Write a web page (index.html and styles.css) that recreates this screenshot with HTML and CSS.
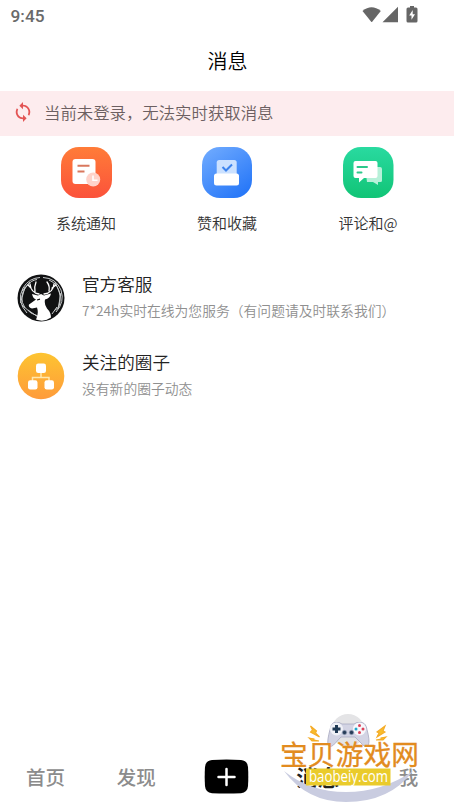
FILE: index.html
```html
<!DOCTYPE html>
<html lang="zh-CN">
<head>
<meta charset="utf-8">
<title>消息</title>
<link rel="stylesheet" href="styles.css">
</head>
<body>
<div class="app">
  <div class="status">
    <span class="time">9:45</span>
    <svg class="status-icons" width="58" height="20" viewBox="0 0 58 20">
      <path d="M.5 5Q9.500-2.500 18.800 5L10.200 15.700Q9.700 16.200 9.200 15.700Z"/>
      <path d="M20.500 16.300 36 .8v15.500z"/>
      <path d="M48 0h4v1.500h2q1.500 0 1.500 1.500v12q0 1.500-1.500 1.500h-8q-1.500 0-1.500-1.500V3q0-1.500 1.500-1.500h2z"/>
      <path class="bolt" d="m50.700 4-3.500 5.500h2.300v4.300l3.500-5.500h-2.300z"/>
    </svg>
  </div>
  <header class="title">消息</header>
  <div class="notice">
    <svg width="16" height="20" viewBox="4 1 16 22">
      <path class="sync" d="M12 4V1L8 5l4 4V6c3.310 0 6 2.690 6 6 0 1.010-.25 1.970-.7 2.800l1.460 1.460C19.540 15.030 20 13.570 20 12c0-4.420-3.580-8-8-8zm0 14c-3.310 0-6-2.690-6-6 0-1.010.25-1.970.7-2.800L5.240 7.740C4.460 8.970 4 10.430 4 12c0 4.420 3.580 8 8 8v3l4-4-4-4v3z"/>
    </svg>
    <span>当前未登录，无法实时获取消息</span>
  </div>
  <section class="shortcuts">
    <div class="shortcut">
      <svg width="51" height="51" viewBox="0 0 51 51">
        <defs><linearGradient id="red" x1="0" y1="0" x2="0" y2="1"><stop stop-color="#ff7c38"/><stop offset="1" stop-color="#fb523b"/></linearGradient></defs>
        <rect width="51" height="51" rx="18" fill="url(#red)"/>
        <rect x="11.500" y="12" width="23" height="25" rx="3" fill="#fff"/>
        <path d="M16.500 18.800h12M16.500 24.600h7" stroke="#d9785e" stroke-width="2"/>
        <circle cx="32.200" cy="32.500" r="7" fill="#ffd3ca"/>
        <path d="M32 28.500v4.800h4.500" fill="none" stroke="#fff" stroke-width="1.600"/>
      </svg>
      <span>系统通知</span>
    </div>
    <div class="shortcut">
      <svg width="51" height="51" viewBox="0 0 51 51">
        <defs><linearGradient id="blue" x1="0" y1="0" x2=".7" y2="1"><stop stop-color="#73adff"/><stop offset="1" stop-color="#2878f8"/></linearGradient></defs>
        <rect width="50" height="51" rx="18" fill="url(#blue)"/>
        <rect x="14.700" y="13" width="20" height="18" rx="2.500" fill="#cbe1ff"/>
        <path d="m20.500 20 3.500 3.500 6-6" fill="none" stroke="#3c83ed" stroke-width="2"/>
        <rect x="12" y="26.500" width="25" height="12" rx="2.500" fill="#fff"/>
      </svg>
      <span>赞和收藏</span>
    </div>
    <div class="shortcut">
      <svg width="51" height="51" viewBox="0 0 51 51">
        <defs><linearGradient id="green" x1="0" y1="0" x2="0" y2="1"><stop stop-color="#29daa0"/><stop offset="1" stop-color="#11c476"/></linearGradient></defs>
        <rect width="50.500" height="51" rx="18" fill="url(#green)"/>
        <path d="M22 20h15q2 0 2 2v11.500q0 1.500-1.500 1.500H35v3l-5-3h-6z" fill="#b7f0d9"/>
        <path d="M12.500 14h20q2 0 2 2v13q0 2-2 2H21l-5 4.500V31h-3.500q-2 0-2-2V16q0-2 2-2z" fill="#fff"/>
        <path d="M14.500 20h9.500M14.500 25.500h4" stroke="#2cc98b" stroke-width="2" stroke-linecap="round"/>
      </svg>
      <span>评论和@</span>
    </div>
  </section>
  <section class="list">
    <div class="row">
      <svg width="48" height="48" viewBox="0 0 48 48">
        <circle cx="24" cy="24" r="23.500" fill="#101112"/>
        <g fill="none" stroke="#c9cccd" stroke-width="1">
          <path d="M10 39Q-1 27 6 14 12 4 23 3.500M8 34Q1 23 9 13 14 6 20 5.500M5 17 13 8M3.500 29 8 13M5 31l9 8 7 3M11 36l10 7"/>
          <path d="M26 3.500Q39 4 44 16 48 28 39 38M32 6Q42 10 43 22T38 36M38 8l6 14M44 19l-3 16M40 33l-5 7"/>
        </g>
        <g fill="none" stroke="#fff" stroke-width="1.300" stroke-linecap="round">
          <path d="M22 20Q14 19 13 10M18 18Q17 13 19 8M14 14l-3-3M27 20Q36 19 37 10M32 17Q33 12 30 8M35 14l4-3"/>
        </g>
        <path d="m15 20 6 1.500 3-1.500 3 1.500 7-2q-1 5-6 6-1 5 2 9 4 4 4 9-7 5-15 2 3-6 1-12l-5 1q-4-1-3-4l7-5q-3-1-4-5.500z" fill="#fff"/>
        <path d="m20 26 3-.8" stroke="#111" stroke-width="1.200"/>
      </svg>
      <div class="row-text"><div class="name">官方客服</div><div class="desc">7*24h实时在线为您服务（有问题请及时联系我们）</div></div>
    </div>
    <div class="row">
      <svg width="48" height="48" viewBox="0 0 48 48">
        <defs><linearGradient id="amber" x1="0" y1="0" x2="0" y2="1"><stop stop-color="#fdc431"/><stop offset="1" stop-color="#fe9b3b"/></linearGradient></defs>
        <circle cx="24" cy="24" r="23.300" fill="url(#amber)"/>
        <path d="M24 20v5.500M15.500 30v-4.500h16.500V30" fill="none" stroke="#ffe8ae" stroke-width="1.500"/>
        <g fill="#fff"><rect x="19" y="11.500" width="10" height="9.500" rx="2.200"/><rect x="11" y="28.200" width="9.500" height="9.300" rx="2.200"/><rect x="27.500" y="28.200" width="9.500" height="9.300" rx="2.200"/></g>
      </svg>
      <div class="row-text"><div class="name">关注的圈子</div><div class="desc">没有新的圈子动态</div></div>
    </div>
  </section>
  <nav class="tabs">
    <span>首页</span>
    <span>发现</span>
    <svg width="45" height="36" viewBox="0 0 45 36"><path d="M8 1Q22.500.2 37 1 43.500 1.500 44 8 44.600 18 44 27 43.500 33.500 37 34.200 22.500 35 8 34.200 1.500 33.500 1 27 .4 18 1 8 1.500 1.500 8 1z"/><path d="M22.500 10v16M14.500 18h16" stroke="#fff" stroke-width="2.500" stroke-linecap="round"/></svg>
    <span class="active">消息</span>
    <span>我</span>
  </nav>
  <svg class="watermark" width="160" height="102" viewBox="0 0 160 102">
    <path d="M14 66Q40 87 76 87T143 66Q120 97 76 97 37 97 14 66z" fill="#c9cce0"/>
    <circle cx="78" cy="25.500" r="16.500" fill="#e4e4e6"/>
    <path d="M64 17.500h5l3 1.500h12l3-1.500h5q4 1 5 7 3 11 1.500 15-2.500 4-6 0L85 32H71l-7.500 8q-3.500 3-5.500-.5-1-4 2-15 1-6 4-7z" fill="#d3d4e4" stroke="#a8aac0" stroke-width=".8"/>
    <circle cx="66.500" cy="24" r="6.500" fill="#f0f1f7"/><circle cx="89.500" cy="24" r="6.500" fill="#f7f7fb"/>
    <path d="M66.500 20v8M62.500 24h8" stroke="#203a55" stroke-width="3"/>
    <g fill="#dc4259"><circle cx="89.500" cy="20.500" r="1.500"/><circle cx="89.500" cy="27.500" r="1.500"/><circle cx="93" cy="24" r="1.500"/></g><circle cx="86" cy="24" r="1.500" fill="#23a7cc"/>
    <g fill="#263c58" stroke="#9da7bd" stroke-width=".8"><circle cx="74.500" cy="27.500" r="2.200"/><circle cx="81.500" cy="27.500" r="2.200"/></g>
    <path d="m40.500 21 6 5-1 2 4 4-9-5 2-2zM39 33l5 1v1l5 1-7 0zM115 21l-8 6 2 1-2 4 8-5-2-1zM116 32l-5 1v1l-5 1 7 0z" fill="#f8bd2b" stroke="#f5ac28" stroke-width="1.100"/>
    <text class="brand" x="10" y="60" textLength="139">宝贝游戏网</text>
    <rect x="36" y="63.500" width="84.500" height="17" fill="#eacb2b"/>
    <text class="site" x="39" y="76.500" textLength="79" lengthAdjust="spacingAndGlyphs">baobeiy.com</text>
  </svg>
</div>
</body>
</html>
```
FILE: styles.css
```css
* { box-sizing: border-box; }
body { margin: 0; background: #fff; font-family: "Noto Sans CJK SC", sans-serif; font-weight: 350; color: #333; }
.app { position: relative; display: flex; flex-direction: column; width: 454px; height: 807px; overflow: hidden; }
svg { display: block; flex: none; }
.status { display: flex; justify-content: space-between; height: 31px; padding: 6px 34px 0 10.5px; }
.time { font: 500 17.3px/20px Roboto, sans-serif; color: #6a6a6a; }
.status-icons { fill: #666; }
.status-icons .bolt { fill: #fff; }
.title { height: 60px; line-height: 60px; padding-left: 1px; text-align: center; font-size: 20px; color: #000; }
.notice { display: flex; align-items: center; height: 45px; padding: 0 15px 3px; gap: 13px; background: #fdecee; color: #6c5f61; font-size: 16.4px; }
.notice svg { margin-bottom: 1px; }
.sync { fill: #e35454; }
.shortcuts { display: grid; grid-template-columns: repeat(3, 141px); justify-content: center; height: 122px; padding: 11px 0 0; }
.shortcut { display: flex; flex-direction: column; align-items: center; gap: 14px; font-size: 15px; line-height: 22px; }
.list { padding: 0 17px; }
.row { display: flex; height: 78px; padding-top: 16px; gap: 17px; }
.name { margin-top: -3px; font-size: 17.6px; line-height: 26px; color: #222; }
.desc { margin-top: 2px; font-size: 13.8px; line-height: 22px; color: #8f8f8f; white-space: nowrap; }
.tabs { display: grid; grid-template-columns: repeat(5, 1fr); align-items: center; justify-items: center; height: 60px; margin-top: auto; padding-bottom: 1px; font-size: 19.5px; font-weight: 500; color: #8c8c8c; }
.tabs .active { color: #222; font-size: 21.5px; font-weight: 700; }
.watermark { position: absolute; left: 270px; top: 705px; }
.brand { font: 400 27.7px "Noto Sans CJK SC", sans-serif; fill: #e28b20; stroke: #e28b20; stroke-width: .3; }
.site { font: 500 16px "Open Sans", sans-serif; fill: #fff; }
```
